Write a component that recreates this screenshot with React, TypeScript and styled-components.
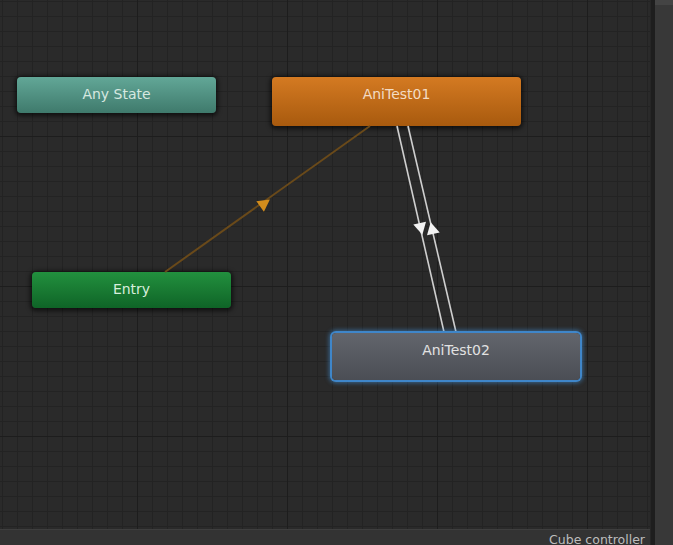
import React from "react";
import styled, { createGlobalStyle } from "styled-components";

const GlobalStyle = createGlobalStyle`
  html, body {
    margin: 0;
    padding: 0;
    background: #2a2a2a;
    overflow: hidden;
  }
`;

const Window = styled.div`
  width: 673px;
  height: 545px;
  display: flex;
  flex-direction: row;
  font-family: "DejaVu Sans", "Liberation Sans", sans-serif;
`;

const Main = styled.div`
  width: 650px;
  display: flex;
  flex-direction: column;
`;

const Canvas = styled.div`
  position: relative;
  flex: 1;
  overflow: hidden;
  background-color: #2a2a2a;
  background-image: linear-gradient(to right, #1d1d1d 1px, transparent 1px),
    linear-gradient(to bottom, #1d1d1d 1px, transparent 1px),
    linear-gradient(to right, #232323 1px, transparent 1px),
    linear-gradient(to bottom, #232323 1px, transparent 1px);
  background-size: 150px 150px, 150px 150px, 15px 15px, 15px 15px;
  background-position: 137px 0, 0 136px, 2px 0, 0 1px;
`;

const Edges = styled.svg`
  position: absolute;
  left: 0;
  top: 0;
`;

const StatusBar = styled.div`
  height: 15px;
  background: #333333;
  border-top: 1px solid #3e3e3e;
  display: flex;
  justify-content: flex-end;
  padding-right: 5px;
  overflow: hidden;
  color: #bdbdbd;
  font-size: 12.5px;
  line-height: 19px;
`;

const Divider = styled.div`
  width: 5px;
  background: #1e1e1e;
  border-left: 1px solid #262626;
  box-sizing: border-box;
`;

const SidePanel = styled.div`
  flex: 1;
  background: #383838;
  border-top: 5px solid #444444;
`;

type Tone = "any" | "default" | "entry" | "selected";

const tones: Record<Tone, { top: string; bottom: string; text: string }> = {
  any: { top: "#62a797", bottom: "#3f7a6c", text: "#d6e8e0" },
  default: { top: "#d47a22", bottom: "#a85a0e", text: "#f3dcc4" },
  entry: { top: "#22903e", bottom: "#0f6427", text: "#d8eedd" },
  selected: { top: "#62656c", bottom: "#4b4e55", text: "#e2e2e2" },
};

const Node = styled.div<{ $tone: Tone; $x: number; $y: number; $w: number; $h: number }>`
  position: absolute;
  left: ${(p) => p.$x}px;
  top: ${(p) => p.$y}px;
  width: ${(p) => p.$w}px;
  height: ${(p) => p.$h}px;
  box-sizing: border-box;
  border-radius: 4px;
  background: linear-gradient(
    to bottom,
    ${(p) => tones[p.$tone].top},
    ${(p) => tones[p.$tone].bottom}
  );
  color: ${(p) => tones[p.$tone].text};
  font-size: 14px;
  text-align: center;
  padding-top: 9px;
  line-height: 17px;
  box-shadow: ${(p) =>
    p.$tone === "selected"
      ? "0 0 0 2px #3f86c9, 0 0 4px 3px rgba(70, 150, 220, 0.55)"
      : "0 1px 4px 2px rgba(0, 0, 0, 0.6)"};
`;

const Arrow: React.FC<{ x: number; y: number; angle: number; fill: string }> = ({
  x,
  y,
  angle,
  fill,
}) => (
  <polygon
    points="6,0 -6,-6.5 -6,6.5"
    fill={fill}
    transform={`translate(${x} ${y}) rotate(${angle})`}
  />
);

const App: React.FC = () => (
  <>
    <GlobalStyle />
    <Window>
      <Main>
        <Canvas>
          <Node $tone="any" $x={17} $y={77} $w={199} $h={36}>
            Any State
          </Node>
          <Node $tone="default" $x={272} $y={77} $w={249} $h={49}>
            AniTest01
          </Node>
          <Node $tone="entry" $x={32} $y={272} $w={199} $h={36}>
            Entry
          </Node>
          <Edges width={650} height={530}>
            <line x1={165} y1={272} x2={370} y2={126} stroke="#6a4a1a" strokeWidth={2} />
            <Arrow x={265} y={203} angle={-35.5} fill="#d38d1c" />
            <line x1={397} y1={126} x2={444} y2={332} stroke="#2a2a2a" strokeWidth={3.5} />
            <line x1={397} y1={126} x2={444} y2={332} stroke="#cfcfcf" strokeWidth={1.6} />
            <line x1={408} y1={126} x2={456} y2={332} stroke="#2a2a2a" strokeWidth={3.5} />
            <line x1={408} y1={126} x2={456} y2={332} stroke="#cfcfcf" strokeWidth={1.6} />
            <Arrow x={421} y={229} angle={77} fill="#f2f2f2" />
            <Arrow x={432} y={228} angle={-103} fill="#f2f2f2" />
          </Edges>
          <Node $tone="selected" $x={332} $y={333} $w={248} $h={47}>
            AniTest02
          </Node>
        </Canvas>
        <StatusBar>Cube controller</StatusBar>
      </Main>
      <Divider />
      <SidePanel />
    </Window>
  </>
);

export default App;
